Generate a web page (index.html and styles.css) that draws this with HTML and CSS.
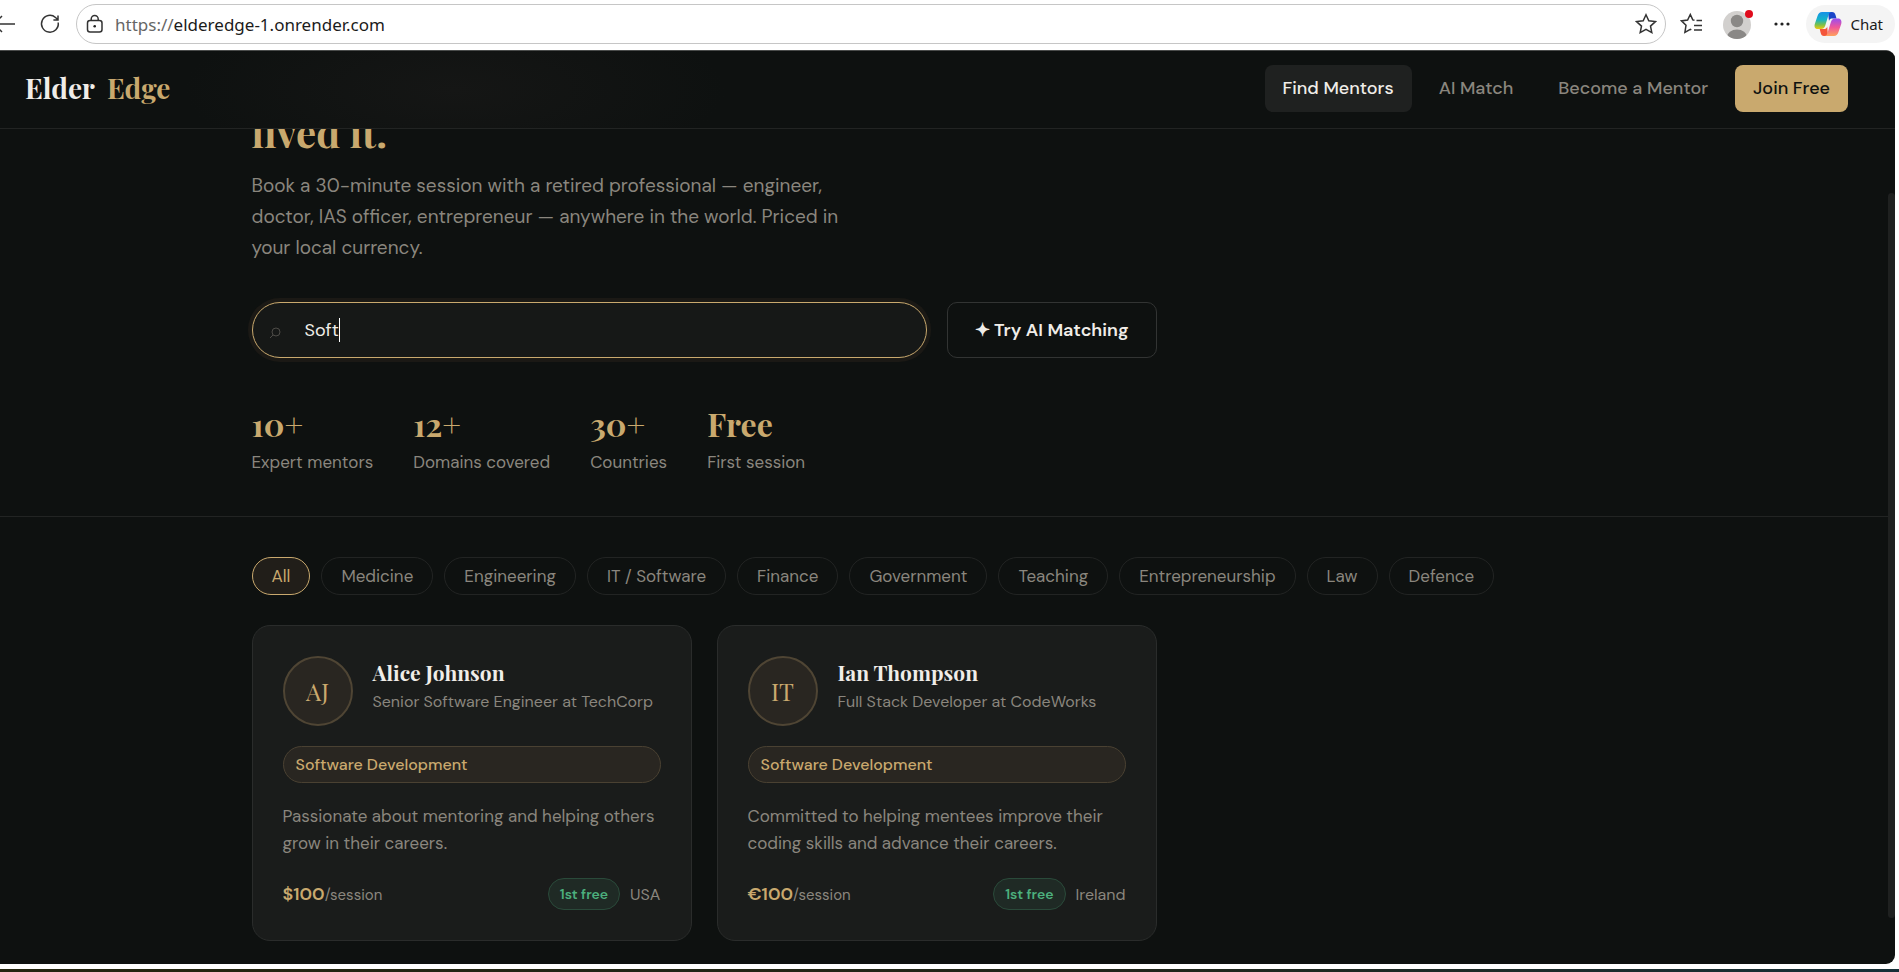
FILE: index.html
```html
<!DOCTYPE html>
<html lang="en">
<head>
  <meta charset="UTF-8" />
  <meta name="viewport" content="width=device-width, initial-scale=1.0"/>
  <title>Elder Edge</title>
  <link rel="stylesheet" href="styles.css">
</head>
<body>
  <div class="toolbar">
    <button class="icon-btn" aria-label="Back">
      <svg width="24" height="24" viewBox="0 0 24 24"><path d="M23 12H2M10 4l-8 8 8 8"/></svg>
    </button>
    <button class="icon-btn refresh" aria-label="Refresh">
      <svg width="24" height="24" viewBox="0 0 24 24"><path d="M20.200 10.500A8.400 8.400 0 1 1 17.500 5.500L20 7.800M20 3.500v4.600h-4.600"/></svg>
    </button>
    <div class="address">
      <svg class="lock" width="20" height="20" viewBox="0 0 20 20"><rect x="2.500" y="6.500" width="14.500" height="11.500" rx="2.500"/><path d="M6.200 6.500V5a3.500 3.500 0 0 1 7 0v1.500"/><circle class="dot" cx="9.700" cy="12.200" r="1.300"/></svg>
      <span class="url"><span>https://</span>elderedge-1.onrender.com</span>
      <svg class="star" width="22" height="22" viewBox="0 0 22 22"><path d="M11 1.800l2.800 6 6.600.800-4.900 4.500 1.300 6.500L11 16.400l-5.800 3.200 1.300-6.500L1.600 8.600l6.600-.800z"/></svg>
    </div>
    <button class="icon-btn favorites" aria-label="Favorites">
      <svg width="24" height="24" viewBox="0 0 24 24"><path d="M14.500 8.300l-1.700-.400L10.300 2.500 7.600 8 1.500 8.900l4.500 4.400-1.100 7 5.400-3 1 .600M16.500 8.500H22M14 13.500h8M14 18h8"/></svg>
    </button>
    <button class="icon-btn profile" aria-label="Profile">
      <svg width="32" height="32" viewBox="0 0 32 32">
        <clipPath id="face"><circle cx="15" cy="17" r="14"/></clipPath>
        <circle cx="15" cy="17" r="14" fill="#d2d0ce"/>
        <g clip-path="url(#face)" fill="#8a8886"><circle cx="15" cy="13" r="6.200"/><ellipse cx="15" cy="29" rx="10" ry="7.500"/></g>
        <circle cx="27" cy="6" r="4" fill="#e00b1c"/>
      </svg>
    </button>
    <button class="icon-btn more" aria-label="Settings and more">
      <svg width="20" height="20" viewBox="0 0 20 20"><g class="dot"><circle cx="4" cy="10" r="1.600"/><circle cx="10" cy="10" r="1.600"/><circle cx="16" cy="10" r="1.600"/></g></svg>
    </button>
    <button class="copilot">
      <svg width="28" height="26" viewBox="0 0 28 26">
        <defs>
          <linearGradient id="cool" x1="0" y1="0" x2="0" y2="1"><stop offset="0" stop-color="#1690e8"/><stop offset=".45" stop-color="#14b4c8"/><stop offset=".75" stop-color="#7cc04a"/><stop offset="1" stop-color="#f2c80f"/></linearGradient>
          <linearGradient id="warm" x1="0" y1="0" x2="0" y2="1"><stop offset="0" stop-color="#9a4df0"/><stop offset=".5" stop-color="#f0579a"/><stop offset="1" stop-color="#ffa25c"/></linearGradient>
        </defs>
        <path fill="#1a45c8" d="M14 1h4c2 0 3 1 3.500 3l1 3.500h-4c-2 0-3 .500-3.500 2.500z"/>
        <path fill="#f4553a" d="M14 25h-4c-2 0-2.800-1-3.300-3l-1-4h4c2 0 3-.500 3.500-2.500z"/>
        <path fill="url(#cool)" d="M8 1h10c-2 0-3 1-3.500 3l-3.400 11c-.700 2-2 3-4 3H4c-3 0-4-2-3.200-5L3.500 5C4.400 2.300 5.800 1 8 1z"/>
        <path fill="url(#warm)" d="M20 25H10c2 0 3-1 3.500-3l3.400-11c.700-2 2-3.500 4-3.500H24c3 0 4 2.500 3.200 5.500L24.500 21c-.900 2.700-2.300 4-4.500 4z"/>
      </svg>
      Chat
    </button>
  </div>

  <div class="page">
    <header>
      <a class="logo" href="#">Elder <span>Edge</span></a>
      <nav>
        <a class="active" href="#">Find Mentors</a>
        <a href="#">AI Match</a>
        <a href="#">Become a Mentor</a>
        <a class="join" href="#">Join Free</a>
      </nav>
    </header>

    <section class="hero">
      <div class="container">
        <h1>lived it.</h1>
        <p class="intro">Book a 30-minute session with a retired professional — engineer, doctor, IAS officer, entrepreneur — anywhere in the world. Priced in your local currency.</p>
        <div class="search-row">
          <div class="search">
            <svg class="search-icon" width="12" height="12" viewBox="0 0 12 12"><circle cx="7" cy="5" r="4"/><path d="M4 8l-3 3"/></svg>
            <input type="text" value="Soft" aria-label="Search mentors">
            <span class="caret"></span>
          </div>
          <button class="ai-btn">✦ Try AI Matching</button>
        </div>
        <div class="stats">
          <div class="stat"><strong>10<i>+</i></strong><span>Expert mentors</span></div>
          <div class="stat"><strong>12<i>+</i></strong><span>Domains covered</span></div>
          <div class="stat"><strong>30<i>+</i></strong><span>Countries</span></div>
          <div class="stat"><strong>Free</strong><span>First session</span></div>
        </div>
      </div>
    </section>

    <main>
      <div class="container">
        <div class="filters">
          <button class="selected">All</button>
          <button>Medicine</button>
          <button>Engineering</button>
          <button>IT / Software</button>
          <button>Finance</button>
          <button>Government</button>
          <button>Teaching</button>
          <button>Entrepreneurship</button>
          <button>Law</button>
          <button>Defence</button>
        </div>

        <div class="grid">
          <article class="card">
            <div class="card-top">
              <div class="avatar">AJ</div>
              <div class="who">
                <h2>Alice Johnson</h2>
                <p class="role">Senior Software Engineer at TechCorp</p>
              </div>
            </div>
            <div class="tag">Software Development</div>
            <p class="bio">Passionate about mentoring and helping others grow in their careers.</p>
            <div class="card-bottom">
              <div class="price"><b>$100</b>/session</div>
              <span class="free">1st free</span>
              <span class="country">USA</span>
            </div>
          </article>
          <article class="card">
            <div class="card-top">
              <div class="avatar">IT</div>
              <div class="who">
                <h2>Ian Thompson</h2>
                <p class="role">Full Stack Developer at CodeWorks</p>
              </div>
            </div>
            <div class="tag">Software Development</div>
            <p class="bio">Committed to helping mentees improve their coding skills and advance their careers.</p>
            <div class="card-bottom">
              <div class="price"><b>€100</b>/session</div>
              <span class="free">1st free</span>
              <span class="country">Ireland</span>
            </div>
          </article>
        </div>
      </div>
    </main>
    <div class="scroll-thumb"></div>
  </div>
  <div class="taskbar"></div>
</body>
</html>
```

FILE: styles.css
```css
:root {
  --bg: #0e1110;
  --card: #1a1c1b;
  --line: #222423;
  --text: #f0ede8;
  --muted: #8a867e;
  --gold: #c9a96e;
  --green: #4caf7d;
  --sans: "DM Sans", Inter, sans-serif;
  --serif: "Playfair Display", "Liberation Serif", serif;
}

* {
  box-sizing: border-box;
}

body {
  margin: 0;
  min-height: 100vh;
  display: flex;
  flex-direction: column;
  background: #fff;
  color: var(--text);
  font-family: var(--sans);
  font-size: 16px;
}

h1, h2, p {
  margin: 0;
}

a {
  text-decoration: none;
}

button, input {
  font-family: inherit;
}

button {
  cursor: pointer;
}

/* browser toolbar */
.toolbar {
  height: 50px;
  display: flex;
  align-items: center;
  padding-bottom: 2px;
  padding-right: 4px;
  margin-left: -8px;
}

.toolbar svg {
  display: block;
  fill: none;
  stroke: #333;
  stroke-width: 1.5;
}

.toolbar .dot {
  fill: #222;
  stroke: none;
}

.icon-btn {
  border: none;
  background: none;
  padding: 0;
  margin-right: 22px;
}

.refresh,
.more {
  margin-right: 14px;
}

.favorites,
.profile {
  margin-right: 18px;
}

.toolbar .profile svg,
.toolbar .copilot svg {
  stroke: none;
}

.address {
  flex: 1;
  height: 40px;
  display: flex;
  align-items: center;
  gap: 10px;
  margin-right: 14px;
  padding: 0 8px;
  border: 1px solid #c6c6c6;
  border-radius: 20px;
}

.url {
  flex: 1;
  font-family: "Segoe UI", "Noto Sans", sans-serif;
  font-size: 17px;
  color: #1b1b1b;
}

.url span {
  color: #666;
}

.copilot {
  display: flex;
  align-items: center;
  gap: 8px;
  height: 38px;
  padding: 0 12px 0 8px;
  border: none;
  border-radius: 19px;
  background: #f4f4f4;
  color: #1b1b1b;
  font-family: "Segoe UI", "Noto Sans", sans-serif;
  font-size: 15px;
}

/* site */
.page {
  flex: 1;
  position: relative;
  overflow: hidden;
  margin-right: 4px;
  background: var(--bg);
  border-top: 1px solid #4a4c4b;
  border-radius: 0 9px 9px 0;
}

header {
  position: relative;
  z-index: 2;
  height: 78px;
  display: flex;
  align-items: center;
  justify-content: space-between;
  padding: 0 47px 2px 25px;
  background: radial-gradient(ellipse 270px 90px at 24% 50%, #151615, var(--bg));
  border-bottom: 1px solid var(--line);
}

.logo {
  padding-bottom: 2px;
  font-family: var(--serif);
  font-size: 28px;
  font-weight: 700;
  color: var(--text);
}

.logo span {
  margin-left: 6px;
  color: var(--gold);
}

nav {
  display: flex;
  gap: 9px;
}

nav a {
  padding: 0 18px;
  border-radius: 8px;
  line-height: 47px;
  font-size: 18px;
  font-weight: 500;
  color: var(--muted);
}

nav .active {
  background: #1f2120;
  color: var(--text);
}

nav .join {
  background: var(--gold);
  color: var(--bg);
}

/* room for the scrollbar on the right */
.hero,
main {
  padding-right: 22px;
}

.container {
  width: 1370px;
  max-width: calc(100% - 60px);
  margin: 0 auto;
}

.hero {
  border-bottom: 1px solid var(--line);
  padding-bottom: 40px;
}

.hero h1 {
  margin-top: -22px;
  font-family: var(--serif);
  font-size: 40px;
  line-height: 50px;
  color: var(--gold);
}

.intro {
  margin-top: 13px;
  max-width: 600px;
  font-size: 19px;
  line-height: 31px;
  color: var(--muted);
}

.search-row {
  display: flex;
  gap: 20px;
  max-width: 905px;
  margin-top: 39px;
}

.search {
  flex: 1;
  position: relative;
}

.search input {
  display: block;
  width: 100%;
  height: 56px;
  padding: 0 20px 0 52px;
  border: 1px solid var(--gold);
  border-radius: 28px;
  outline: none;
  box-shadow: 0 0 0 4px #1b1915;
  background: #161817;
  color: var(--text);
  font-size: 18px;
}

.search-icon {
  position: absolute;
  left: 17px;
  top: 25px;
  fill: none;
  stroke: #4d4b47;
}

.caret {
  position: absolute;
  left: 87px;
  top: 16px;
  width: 1px;
  height: 24px;
  background: #fff;
}

.ai-btn {
  width: 210px;
  border: 1px solid #323433;
  border-radius: 10px;
  background: none;
  color: var(--text);
  font-size: 18px;
  font-weight: 600;
}

.stats {
  display: flex;
  gap: 40px;
  margin-top: 45px;
}

.stat strong {
  display: block;
  font-family: var(--serif);
  font-size: 32px;
  line-height: 42px;
  color: var(--gold);
}

.stat i {
  font-style: normal;
  font-weight: 400;
}

.stat span {
  display: block;
  margin-top: 3px;
  font-size: 17px;
  line-height: 28px;
  color: var(--muted);
}

.filters {
  display: flex;
  flex-wrap: wrap;
  gap: 11px;
  padding: 40px 0 30px;
}

.filters button {
  height: 38px;
  padding: 0 19px;
  border: 1px solid var(--line);
  border-radius: 19px;
  background: none;
  color: var(--muted);
  font-size: 17px;
}

.filters .selected {
  border-color: var(--gold);
  background: #211e19;
  color: var(--gold);
}

.grid {
  display: grid;
  grid-template-columns: repeat(auto-fill, minmax(400px, 1fr));
  gap: 25px;
  padding-bottom: 23px;
}

.card {
  padding: 30px;
  border: 1px solid #2a2c2b;
  border-radius: 18px;
  background: var(--card);
}

.card-top {
  display: flex;
  align-items: center;
  gap: 20px;
}

.avatar {
  flex: none;
  width: 70px;
  height: 70px;
  border: 2px solid #4f4534;
  border-radius: 50%;
  background: #292621;
  font-family: var(--serif);
  font-size: 24px;
  line-height: 66px;
  text-align: center;
  color: var(--gold);
}

.who {
  padding-bottom: 10px;
}

.card h2 {
  margin-bottom: 2px;
  font-family: var(--serif);
  font-size: 21px;
  line-height: 30px;
}

.role {
  font-size: 16px;
  line-height: 26px;
  color: var(--muted);
}

.tag {
  margin: 20px 0;
  padding: 0 12px;
  border: 1px solid #4a4132;
  border-radius: 19px;
  background: #292621;
  font-size: 16px;
  font-weight: 500;
  line-height: 35px;
  color: var(--gold);
}

.bio {
  font-size: 17px;
  line-height: 27px;
  color: var(--muted);
}

.card-bottom {
  display: flex;
  align-items: center;
  gap: 10px;
  margin-top: 21px;
  font-size: 15px;
  color: var(--muted);
}

.price {
  flex: 1;
}

.price b {
  font-size: 18px;
  font-weight: 600;
  color: var(--gold);
}

.free {
  padding: 0 11px;
  border: 1px solid #2a4a3a;
  border-radius: 16px;
  background: #1f2a25;
  font-size: 14px;
  font-weight: 600;
  line-height: 30px;
  color: var(--green);
}

.country {
  font-size: 16px;
}

/* scrollbar drawn over the page edge */
.scroll-thumb {
  position: absolute;
  top: 142px;
  right: 0;
  bottom: 46px;
  width: 7px;
  border-radius: 4px;
  background: #1f2120;
}

.taskbar {
  height: 3px;
  margin-top: 5px;
  background: linear-gradient(to right, #25260f, #20261a 60%, #173038);
}
```
